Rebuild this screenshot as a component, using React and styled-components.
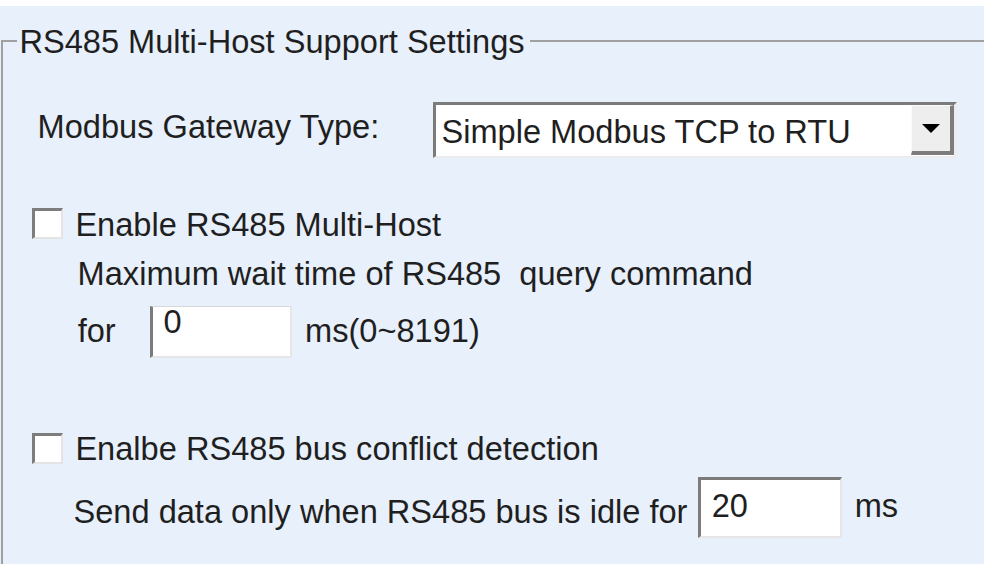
import React from "react";
import styled, { createGlobalStyle } from "styled-components";

const GlobalStyle = createGlobalStyle`
  html, body { margin: 0; padding: 0; background: #ffffff; }
  body { overflow: hidden; }
`;

const Page = styled.div`
  width: 984px;
  height: 564px;
  box-sizing: border-box;
  padding-top: 6px;
  background: #ffffff;
  display: flex;
  flex-direction: column;
  font-family: "Liberation Sans", Arial, sans-serif;
  font-size: 32.6px;
  line-height: 37px;
  color: #1f1f1f;
  overflow: hidden;
`;

const Panel = styled.div`
  flex: 1;
  background: #e7f0fb;
  padding-top: 16.5px;
  overflow: hidden;
`;

const Group = styled.fieldset`
  margin: 0 0 0 1px;
  padding: 0;
  min-inline-size: 0;
  min-height: 600px;
  border: none;
  border-top: 2px solid #a0a0a0;
  border-left: 2px solid #a0a0a0;
`;

const Legend = styled.legend`
  margin-left: 14px;
  padding: 0 5px 0 2.4px;
  line-height: 37px;
`;

const Body = styled.div`
  display: flex;
  flex-direction: column;
  padding-top: 42.5px;
`;

const Row = styled.div`
  display: flex;
  align-items: flex-start;
  margin-top: ${(p) => p.$gap || 0}px;
  padding-left: ${(p) => p.$indent || 0}px;
`;

const Text = styled.span`
  display: block;
  white-space: pre;
  margin-top: ${(p) => p.$top || 0}px;
  margin-left: ${(p) => p.$left || 0}px;
  width: ${(p) => (p.$width ? `${p.$width}px` : "auto")};
  flex-shrink: 0;
`;

const Select = styled.div`
  width: 524px;
  height: 56px;
  box-sizing: border-box;
  background: #ffffff;
  border-style: solid;
  border-width: 3px 3px 2px 3px;
  border-color: #7b7b7b #ececec #ececec #7b7b7b;
  display: flex;
  justify-content: space-between;
  align-items: flex-start;
`;

const SelectValue = styled.span`
  padding: 8.2px 0 0 5.5px;
  white-space: pre;
`;

const DropButton = styled.div`
  width: 43px;
  height: 50px;
  box-sizing: border-box;
  background: #eeeeee;
  border-style: solid;
  border-width: 1px 4px 4px 1px;
  border-color: #fafafa #7c7c7c #7c7c7c #fafafa;
  display: flex;
  align-items: center;
  justify-content: center;
`;

const Check = styled.div`
  width: 31px;
  height: 31px;
  box-sizing: border-box;
  flex-shrink: 0;
  margin-top: ${(p) => p.$top || 0}px;
  background: #ffffff;
  border-style: solid;
  border-width: 3px 2px 2px 3px;
  border-color: #7d7d7d #e4e4e4 #e4e4e4 #7d7d7d;
`;

const Field = styled.div`
  width: ${(p) => p.$w}px;
  height: ${(p) => p.$h}px;
  box-sizing: border-box;
  flex-shrink: 0;
  margin-left: ${(p) => p.$left || 0}px;
  background: #ffffff;
  border-style: solid;
  border-width: ${(p) => (p.$flatTop ? "1px 2px 2px 3px" : "3px 2px 2px 3px")};
  border-color: ${(p) => (p.$flatTop ? "#d8d8d8" : "#7b7b7b")} #e6e6e6 #e6e6e6 #7b7b7b;
  padding: ${(p) => p.$padTop}px 0 0 ${(p) => p.$padLeft}px;
  line-height: 26px;
`;

function Arrow() {
  return (
    <svg width="18" height="9" viewBox="0 0 18 9">
      <polygon points="0,0 18,0 9,9" fill="#000" />
    </svg>
  );
}

export default function App() {
  return (
    <>
      <GlobalStyle />
      <Page>
        <Panel>
          <Group>
            <Legend>RS485 Multi-Host Support Settings</Legend>
            <Body>
              <Row $indent={34.6}>
                <Text $top={6.2} $width={395.4}>Modbus Gateway Type:</Text>
                <Select>
                  <SelectValue>Simple Modbus TCP to RTU</SelectValue>
                  <DropButton>
                    <Arrow />
                  </DropButton>
                </Select>
              </Row>

              <Row $gap={47.7} $indent={29}>
                <Check $top={2.3} />
                <Text $left={12.4}>Enable RS485 Multi-Host</Text>
              </Row>

              <Row $gap={12.5} $indent={74.6}>
                <Text>{"Maximum wait time of RS485  query command"}</Text>
              </Row>

              <Row $gap={13.8} $indent={74.7}>
                <Text $top={6.2}>for</Text>
                <Field $w={142} $h={52} $left={34.3} $flatTop $padTop={1.7} $padLeft={10.6}>
                  0
                </Field>
                <Text $top={6.2} $left={13}>ms(0~8191)</Text>
              </Row>

              <Row $gap={72.2} $indent={29}>
                <Check $top={2.8} />
                <Text $left={12.4}>Enalbe RS485 bus conflict detection</Text>
              </Row>

              <Row $gap={9.8} $indent={70.5}>
                <Text $top={16.2}>Send data only when RS485 bus is idle for</Text>
                <Field $w={144} $h={61} $left={10.2} $padTop={12.7} $padLeft={11}>
                  20
                </Field>
                <Text $top={10.2} $left={13}>ms</Text>
              </Row>
            </Body>
          </Group>
        </Panel>
      </Page>
    </>
  );
}
